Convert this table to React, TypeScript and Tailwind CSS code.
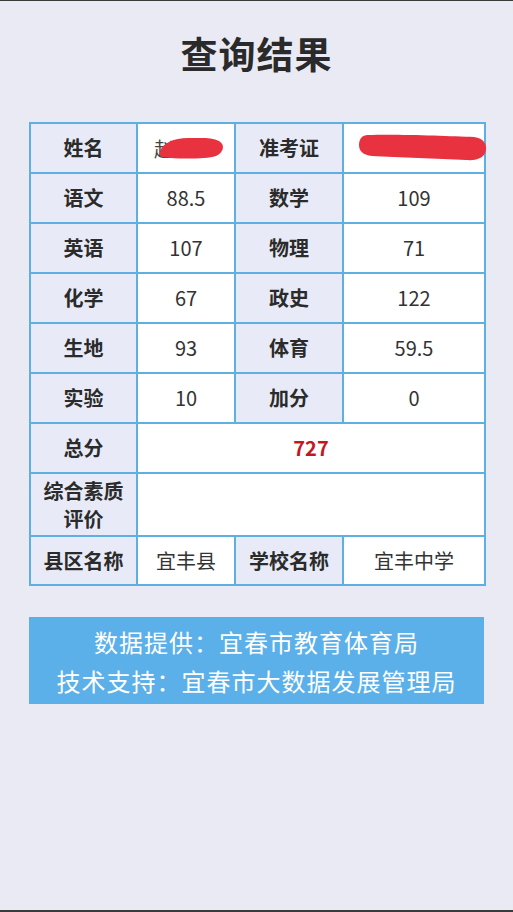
import React from "react";

const font = { fontFamily: '"Noto Sans CJK SC", "Noto Sans", sans-serif' };

function H({ children, className = "" }: { children: React.ReactNode; className?: string }) {
  return (
    <td className={`border-2 border-[#5eb0e2] bg-[#e8ebf7] text-center font-bold text-[20px] text-[#2b2b2b] leading-[26px] ${className}`}>
      {children}
    </td>
  );
}
function V({ children, className = "", colSpan }: { children?: React.ReactNode; className?: string; colSpan?: number }) {
  return (
    <td colSpan={colSpan} className={`border-2 border-[#5eb0e2] bg-white text-center text-[20px] text-[#333] ${className}`}>
      {children}
    </td>
  );
}

export default function App() {
  const rows: [string, string, string, string][] = [
    ["语文", "88.5", "数学", "109"],
    ["英语", "107", "物理", "71"],
    ["化学", "67", "政史", "122"],
    ["生地", "93", "体育", "59.5"],
    ["实验", "10", "加分", "0"],
  ];
  return (
    <div className="w-[513px] h-[912px] bg-[#eaeaf5] flex flex-col border-t border-t-[#3a3a3a] border-b-2 border-b-[#3a3a3a]" style={font}>
      <h1 className="text-center text-[37px] font-bold text-[#2a2a2a] mt-[30px] leading-[45px] tracking-[1px]">查询结果</h1>
      <table className="mt-[46px] ml-[29px] w-[455px] border-collapse table-fixed border-2 border-[#5eb0e2]">
        <colgroup>
          <col className="w-[107px]" />
          <col className="w-[98px]" />
          <col className="w-[108px]" />
          <col className="w-[142px]" />
        </colgroup>
        <tbody>
          <tr className="h-[50px]">
            <H>姓名</H>
            <V className="relative">
              <span className="absolute left-[16px] top-[10px] text-[#444]">赵</span>
              <svg className="absolute left-[18px] top-[10px]" width="70" height="28" viewBox="0 0 70 28">
                <path d="M4 18 C6 9, 18 4, 32 4 C44 4, 56 3, 63 7 C70 11, 67 19, 60 22 C50 25, 30 25, 14 24 C6 23, 2 22, 4 18 Z" fill="#e8323f" />
              </svg>
            </V>
            <H>准考证</H>
            <V className="relative">
              <svg className="absolute left-[14px] top-[9px]" width="129" height="30" viewBox="0 0 129 30">
                <path d="M10 2 C40 1, 90 3, 116 4 C126 5, 129 12, 128 17 C127 24, 120 28, 108 27 C80 26, 40 24, 14 23 C4 22, 1 17, 1 12 C1 6, 4 2, 10 2 Z" fill="#e8323f" />
              </svg>
            </V>
          </tr>
          {rows.map((r) => (
            <tr key={r[0]} className="h-[50px]">
              <H>{r[0]}</H>
              <V>{r[1]}</V>
              <H>{r[2]}</H>
              <V>{r[3]}</V>
            </tr>
          ))}
          <tr className="h-[50px]">
            <H>总分</H>
            <V colSpan={3} className="font-bold text-[#c8161e]">727</V>
          </tr>
          <tr className="h-[63px]">
            <H className="leading-[28px]">综合素质<br />评价</H>
            <V colSpan={3} />
          </tr>
          <tr className="h-[49px]">
            <H>县区名称</H>
            <V>宜丰县</V>
            <H>学校名称</H>
            <V>宜丰中学</V>
          </tr>
        </tbody>
      </table>
      <div className="mt-[31px] ml-[29px] w-[455px] h-[87px] bg-[#5cb0ea] flex flex-col items-center justify-center text-white text-[24px] leading-[39px] tracking-[1px]">
        <div>数据提供：宜春市教育体育局</div>
        <div>技术支持：宜春市大数据发展管理局</div>
      </div>
    </div>
  );
}
